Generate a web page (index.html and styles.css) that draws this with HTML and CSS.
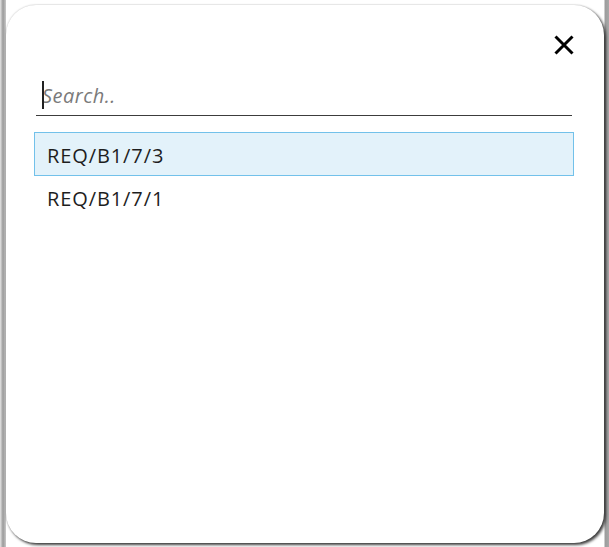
FILE: index.html
```html
<!DOCTYPE html>
<html>
<head>
<meta charset="utf-8">
<link rel="stylesheet" href="styles.css">
</head>
<body>
<div class="backdrop">
  <div class="dialog">
    <div class="header">
      <button class="close" aria-label="Close">
        <svg width="20" height="20" viewBox="0 0 20 20"><path d="M1.5 1.5 L18.5 18.5 M18.5 1.5 L1.5 18.5" stroke="#000" stroke-width="3" fill="none"/></svg>
      </button>
    </div>
    <div class="search">
      <span class="caret"></span><span class="placeholder">Search..</span>
    </div>
    <ul class="list">
      <li class="item selected">REQ/B1/7/3</li>
      <li class="item">REQ/B1/7/1</li>
    </ul>
  </div>
</div>
</body>
</html>
```
FILE: styles.css
```css
html, body {
  margin: 0;
  padding: 0;
  width: 609px;
  height: 547px;
  overflow: hidden;
}
body {
  font-family: "Open Sans", "Noto Sans", sans-serif;
  background: linear-gradient(to right, #e6e6e6 0, #9a9a9a 3px, #c8c8c8 6px, #ffffff 6px, #ffffff 604px, #9c9c9c 605px, #a8a8a8 609px);
}
.backdrop {
  padding: 5px 0 0 6px;
}
.dialog {
  width: 598px;
  height: 538px;
  box-sizing: border-box;
  background: #fff;
  border-radius: 30px;
  box-shadow: 2px 2px 3px rgba(0, 0, 0, 0.75), 0 0 2px rgba(0, 0, 0, 0.25);
  padding: 30px 30px 0 28px;
}
.header {
  display: flex;
  justify-content: flex-end;
  height: 20px;
}
.close {
  width: 20px;
  height: 20px;
  padding: 0;
  border: 0;
  background: none;
  display: block;
}
.close svg { display: block; }
.search {
  margin: 20px 2px 0 2px;
  height: 40px;
  border-bottom: 1px solid #3c3c3c;
  display: flex;
  align-items: center;
  padding-left: 6px;
}
.caret {
  width: 2px;
  height: 28px;
  background: #222;
  margin-right: -2px;
  position: relative;
  z-index: 1;
}
.placeholder {
  font-size: 20px;
  font-style: italic;
  color: #7a7a7a;
  letter-spacing: 0.5px;
}
.list {
  list-style: none;
  margin: 16px 0 0 0;
  padding: 0;
}
.item {
  height: 44px;
  box-sizing: border-box;
  border: 1px solid transparent;
  padding-left: 12px;
  display: flex;
  align-items: center;
  padding-top: 3px;
  font-size: 20px;
  letter-spacing: 0.9px;
  color: #1e1e1e;
}
.item + .item { margin-top: -1px; }
.item.selected {
  background: #e3f2fa;
  border-color: #72c1ea;
}
```
